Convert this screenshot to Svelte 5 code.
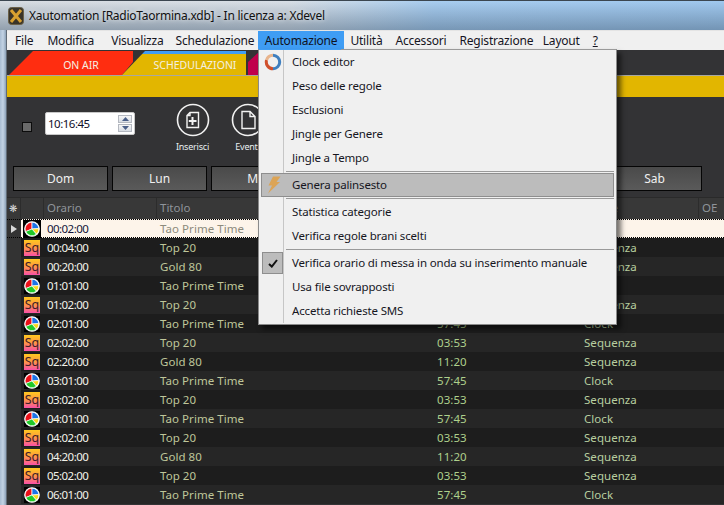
<script>
  const menus = ['File', 'Modifica', 'Visualizza', 'Schedulazione', 'Automazione', 'Utilità', 'Accessori', 'Registrazione', 'Layout'];
  const days = ['Dom', 'Lun', 'Mar', 'Mer', 'Gio', 'Ven', 'Sab'];

  const tao = { kind: 'clock', title: 'Tao Prime Time', len: '57:45', type: 'Clock' };
  const top20 = { kind: 'seq', title: 'Top 20', len: '03:53', type: 'Sequenza' };
  const gold = { kind: 'seq', title: 'Gold 80', len: '11:20', type: 'Sequenza' };

  const rows = [
    { time: '00:02:00', ...tao, selected: true },
    { time: '00:04:00', ...top20 },
    { time: '00:20:00', ...gold },
    { time: '01:01:00', ...tao },
    { time: '01:02:00', ...top20 },
    { time: '02:01:00', ...tao },
    { time: '02:02:00', ...top20 },
    { time: '02:20:00', ...gold },
    { time: '03:01:00', ...tao },
    { time: '03:02:00', ...top20 },
    { time: '04:01:00', ...tao },
    { time: '04:02:00', ...top20 },
    { time: '04:20:00', ...gold },
    { time: '05:02:00', ...top20 },
    { time: '06:01:00', ...tao }
  ];

  const groups = [
    ['Clock editor', 'Peso delle regole', 'Esclusioni', 'Jingle per Genere', 'Jingle a Tempo'],
    ['Genera palinsesto'],
    ['Statistica categorie', 'Verifica regole brani scelti'],
    ['Verifica orario di messa in onda su inserimento manuale', 'Usa file sovrapposti', 'Accetta richieste SMS']
  ];
</script>

<div class="window">
  <div class="titlebar">
    <svg class="logo" width="16" height="18" viewBox="0 0 16 18">
      <rect x="0.5" y="0.5" width="15" height="17" rx="3" fill="#3a3428" stroke="#6a6048" />
      <path d="M3 3 L13 15 M13 3 L3 15" stroke="#d8a030" stroke-width="3" fill="none" />
    </svg>
    <span class="title">Xautomation [RadioTaormina.xdb] - In licenza a: Xdevel</span>
  </div>

  <div class="client">
    <nav class="menubar">
      {#each menus as m}
        <span class="menu" class:open={m === 'Automazione'}>{m}</span>
      {/each}
      <span class="menu help">?</span>
    </nav>

    <div class="tabs">
      <div class="tab onair">ON AIR</div>
      <div class="tab sched">SCHEDULAZIONI</div>
      <div class="tab third"></div>
    </div>
    <div class="band"></div>

    <div class="toolbar">
      <span class="check"></span>
      <div class="timebox">
        <span>10:16:45</span>
        <div class="spin">
          <i><svg width="7" height="4" viewBox="0 0 7 4"><path d="M3.5 0 L7 4 H0 Z" fill="#4a5f88" /></svg></i>
          <i><svg width="7" height="4" viewBox="0 0 7 4"><path d="M0 0 H7 L3.5 4 Z" fill="#4a5f88" /></svg></i>
        </div>
      </div>
      <div class="tool first">
        <svg width="34" height="34" viewBox="0 0 34 34" fill="none" stroke="#f2f2f2">
          <circle cx="17" cy="17" r="15.5" stroke-width="1.6" />
          <path d="M14 9.5 H22.5 V24.5 H11 V12.5 Z M14 9.5 V12.5 H11" stroke-width="1.4" />
          <path d="M16.5 14 V22 M12.8 18 H20.5" stroke-width="2" />
        </svg>
        <span>Inserisci</span>
      </div>
      <div class="tool">
        <svg width="34" height="34" viewBox="0 0 34 34" fill="none" stroke="#f2f2f2">
          <circle cx="17" cy="17" r="15.5" stroke-width="1.6" />
          <path d="M11 8.5 H19 L24 13.5 V25.5 H11 Z M19 8.5 V13.5 H24" stroke-width="1.4" />
        </svg>
        <span>Eventi</span>
      </div>
    </div>

    <div class="days">
      {#each days as d}
        <div class="day">{d}</div>
      {/each}
    </div>

    <div class="grid">
      <div class="head">
        <span class="c-star">❋</span>
        <span class="c-icon"></span>
        <span class="c-time">Orario</span>
        <span class="c-title">Titolo</span>
        <span class="c-len">Durata</span>
        <span class="c-type">Classe</span>
        <span class="c-oe">OE</span>
      </div>
      {#each rows as r}
        <div class="row" class:selected={r.selected}>
          <span class="marker">
            {#if r.selected}
              <svg width="6" height="8" viewBox="0 0 6 8"><path d="M0 0 L6 4 L0 8 Z" fill="#d8d8d8" /></svg>
            {/if}
          </span>
          <span class="cell-icon">
            {#if r.kind === 'clock'}
              <svg width="16" height="16" viewBox="0 0 16 16">
                <rect width="16" height="16" fill="#000" />
                <circle cx="8" cy="8" r="7.8" fill="#fff" />
                <g stroke="#fff" stroke-width="0.7">
                  <path d="M8 8 L8 1.2 A6.8 6.8 0 0 0 1.7 10.6 Z" fill="#ec1018" />
                  <path d="M8 8 L8 1.2 A6.8 6.8 0 0 1 14.8 7.6 Z" fill="#1c74e8" />
                  <path d="M8 8 L14.8 7.6 A6.8 6.8 0 0 1 12.4 13.2 Z" fill="#f8d818" />
                  <path d="M8 8 L12.4 13.2 A6.8 6.8 0 0 1 1.7 10.6 Z" fill="#20c828" />
                </g>
              </svg>
            {:else}
              <span class="sq">Sq</span>
            {/if}
          </span>
          <span class="c-time time">{r.time}</span>
          <span class="c-title name">{r.title}</span>
          <span class="c-len len">{r.len}</span>
          <span class="c-type kind">{r.type}</span>
        </div>
      {/each}
    </div>

    <div class="dropdown">
      {#each groups as group, g}
        {#if g > 0}<div class="sep"></div>{/if}
        {#each group as item}
          <div class="item" class:hot={item === 'Genera palinsesto'}>
            <span class="gutter" class:checked={item.startsWith('Verifica orario')}>
              {#if item === 'Clock editor'}
                <svg width="18" height="18" viewBox="0 0 18 18" fill="none" stroke-width="3">
                  <path d="M9 2.2 A6.8 6.8 0 0 1 15.7 9 A6.8 6.8 0 0 1 9 15.8" stroke="#3f7fbf" />
                  <path d="M9 15.8 A6.8 6.8 0 0 1 2.6 7" stroke="#d0502c" />
                  <path d="M2.6 7 A6.8 6.8 0 0 1 9 2.2" stroke="#e8b48c" />
                </svg>
              {:else if item === 'Genera palinsesto'}
                <svg width="14" height="18" viewBox="0 0 14 18">
                  <path d="M6 0.5 H13.5 L9.5 6 H13 L1 17.5 L5 9.5 H1.5 Z" fill="#e0a24c" />
                </svg>
              {:else if item.startsWith('Verifica orario')}
                <svg width="10" height="9" viewBox="0 0 10 9" fill="none">
                  <path d="M1 5 L3.8 7.6 L9 1" stroke="#111" stroke-width="2" />
                </svg>
              {/if}
            </span>
            <span class="label">{item}</span>
          </div>
        {/each}
      {/each}
    </div>
  </div>
</div>

<style>
  :global(body) {
    margin: 0;
    overflow: hidden;
    background: #333;
  }

  .window {
    width: 724px;
    height: 505px;
    display: flex;
    flex-direction: column;
    overflow: hidden;
    font-family: "Noto Sans", sans-serif;
    font-size: 12px;
    background: linear-gradient(90deg, #a9bdd2 0, #c3d3e4 3px, #8da2b8 6px, #333 7px);
  }

  .titlebar {
    flex: 0 0 30px;
    display: flex;
    align-items: center;
    gap: 5px;
    padding-left: 8px;
    box-sizing: border-box;
    border-top: 1px solid #3b4650;
    background: linear-gradient(180deg, rgba(255, 255, 255, 0) 0, rgba(60, 85, 110, 0.45) 100%),
      linear-gradient(90deg, #d8dde2 0, #d8dfe6 40%, #a8cdf0 60%, #a0c8ee 100%);
  }

  .title {
    color: #111;
    font-size: 12px;
    letter-spacing: -0.25px;
    text-shadow: 0 0 5px rgba(255, 255, 255, 0.9);
  }

  .client {
    position: relative;
    flex: 1;
    margin-left: 7px;
    min-height: 0;
    background: #333335;
  }

  .menubar {
    height: 20px;
    display: flex;
    align-items: stretch;
    padding-left: 1.5px;
    background: #f0f0f0;
    border-top: 1px solid #e4e4e4;
    box-sizing: border-box;
    color: #15151f;
  }

  .menu {
    padding: 0 6.5px;
    line-height: 19px;
    letter-spacing: -0.2px;
  }

  .menu:nth-child(2) {
    padding-left: 7.5px;
    padding-right: 7.5px;
  }

  .menu:nth-child(3) {
    padding-left: 9.5px;
    padding-right: 5.5px;
  }

  .menu:nth-child(4) {
    padding-right: 4px;
  }

  .menu:nth-child(8) {
    padding-right: 3px;
  }

  .menu.open {
    background: #3f9df4;
    color: #10131f;
  }

  .menu.help {
    text-decoration: underline;
  }

  .tabs {
    height: 25px;
    display: flex;
    align-items: flex-end;
    padding-top: 1px;
    padding-left: 2px;
    box-sizing: border-box;
  }

  .tab {
    height: 24px;
    box-sizing: border-box;
    text-align: center;
    line-height: 28px;
    color: #f4f0e0;
    font-size: 10.5px;
  }

  .onair {
    width: 124px;
    padding-left: 20px;
    background: #ff2d10;
    clip-path: polygon(0 100%, 24px 0, 100% 0, 100% 11px, 113px 100%);
  }

  .sched {
    width: 124px;
    margin-left: -11px;
    padding-left: 22px;
    background: linear-gradient(180deg, #3f9df4 0, #3f9df4 3px, #e2b600 3px);
    clip-path: polygon(0 100%, 23px 0, 100% 0, 100% 100%);
  }

  .third {
    width: 60px;
    margin-left: 2px;
    background: #c0004c;
    clip-path: polygon(0 100%, 0 11px, 12px 0, 100% 0, 100% 100%);
  }

  .band {
    height: 22px;
    box-sizing: border-box;
    background: #e2b600;
    border-top: 1px solid #a8a8a0;
  }

  .toolbar {
    height: 69px;
    display: flex;
    color: #eee;
    box-sizing: border-box;
    padding: 6px 0 0 15px;
  }

  .check {
    width: 10px;
    height: 10px;
    margin-top: 19px;
    background: #6a6a6a;
    border: 1px solid #0c0c0c;
    box-sizing: border-box;
  }

  .timebox {
    width: 90px;
    height: 23px;
    margin: 9px 0 0 13px;
    padding: 0 2px;
    display: flex;
    align-items: center;
    justify-content: space-between;
    box-sizing: border-box;
    background: #fff;
    border: 1px solid #c8c8c8;
    border-radius: 2px;
    color: #10102a;
    font-size: 11.5px;
    letter-spacing: -0.5px;
  }

  .spin {
    display: flex;
    flex-direction: column;
    gap: 1px;
  }

  .spin i {
    width: 14px;
    height: 8px;
    display: flex;
    align-items: center;
    justify-content: center;
    background: linear-gradient(180deg, #f6f6f6, #d8dde4);
    border: 1px solid #b4b8c0;
    box-sizing: border-box;
  }

  .tool {
    width: 55px;
    display: flex;
    flex-direction: column;
    align-items: center;
    gap: 3px;
    font-size: 9px;
    letter-spacing: -0.2px;
    line-height: 13px;
    color: #e8eef0;
  }

  .tool.first {
    margin-left: 30px;
  }

  .days {
    height: 25px;
    display: flex;
    gap: 4px;
    padding-left: 6px;
  }

  .day {
    flex: 0 0 95px;
    box-sizing: border-box;
    border: 1px solid #050505;
    background: linear-gradient(180deg, #4a4a4a, #5a5a5a);
    color: #f0f0f0;
    text-align: center;
    line-height: 23px;
    font-size: 12px;
  }

  .grid {
    margin-top: 6px;
  }

  .head {
    height: 22px;
    display: flex;
    align-items: center;
    color: #8f949a;
    background: #383838;
    border-top: 1px solid #2a2a2a;
    box-sizing: border-box;
    font-size: 11.5px;
  }

  .head span {
    height: 100%;
    line-height: 20px;
    box-sizing: border-box;
    border-right: 1px solid #2c2c2c;
    padding-left: 3px;
  }

  .c-star {
    flex: 0 0 14px;
    color: #ddd;
    font-size: 10px;
    padding-left: 2px !important;
  }

  .c-icon {
    flex: 0 0 23px;
  }

  .c-time {
    flex: 0 0 113px;
  }

  .c-title {
    flex: 0 0 277px;
  }

  .c-len {
    flex: 0 0 147px;
  }

  .c-type {
    flex: 0 0 118px;
  }

  .c-oe {
    flex: 0 0 40px;
    border-right: 0 !important;
  }

  .row {
    height: 19px;
    display: flex;
    align-items: center;
    background: linear-gradient(90deg, #333 14px, #262626 14px);
    color: #f2f2ea;
    line-height: 19px;
    font-size: 11.5px;
    letter-spacing: 0.05px;
  }

  .row:nth-child(odd) {
    background: linear-gradient(90deg, #333 14px, #1d1d1d 14px);
  }

  .row > span {
    padding-left: 3px;
    box-sizing: border-box;
  }

  .row .time {
    letter-spacing: -0.55px;
  }

  .row .marker {
    flex: 0 0 14px;
    padding-left: 4px;
    display: flex;
    align-items: center;
  }

  .row .cell-icon {
    flex: 0 0 23px;
    padding-left: 3px;
    display: flex;
    align-items: center;
  }

  .sq {
    width: 16px;
    height: 16px;
    display: block;
    background: linear-gradient(180deg, #ffc820 0, #ff9a40 45%, #f850a8 100%);
    color: #40202a;
    font-size: 12.5px;
    line-height: 15px;
    text-align: center;
  }

  .name {
    color: #bfc69a;
  }

  .len {
    color: #aed08c;
  }

  .kind {
    color: #b8cfa0;
  }

  .selected {
    background: linear-gradient(90deg, #333 14px, #fdf4ea 14px) !important;
    border-top: 1px dotted #000;
    border-bottom: 1px dotted #000;
    box-sizing: border-box;
  }

  .selected .time {
    color: #14143a;
  }

  .selected .name {
    color: #8c8a7c;
  }

  .selected .cell-icon svg {
    outline: 1px solid #000;
  }

  .dropdown {
    position: absolute;
    left: 251px;
    top: 19px;
    width: 359px;
    height: 276px;
    box-sizing: border-box;
    padding: 0 2px;
    background: #f0f0f0;
    border: 1px solid #8a8a8a;
    border-top-color: #9a9a9a;
    box-shadow: 4px 4px 5px rgba(0, 0, 0, 0.55);
    color: #16161e;
  }

  .dropdown::before {
    content: "";
    position: absolute;
    left: 24px;
    top: 0;
    bottom: 1px;
    width: 1px;
    background: #c6c6c6;
  }

  .dropdown::after {
    content: "";
    position: absolute;
    left: 0;
    top: -1px;
    width: 82px;
    height: 1px;
    background: #3f9df4;
  }

  .item {
    height: 24px;
    display: flex;
    align-items: center;
    box-sizing: border-box;
    position: relative;
    z-index: 1;
  }

  .item.hot {
    background: #bcbcbc;
    border: 1px solid #8e8e8e;
  }

  .gutter {
    flex: 0 0 24px;
    height: 24px;
    display: flex;
    align-items: center;
    justify-content: center;
    box-sizing: border-box;
  }

  .hot .gutter {
    opacity: 0.9;
  }

  .gutter.checked {
    height: 22px;
    flex-basis: 21px;
    margin-left: 1px;
    margin-right: 2px;
    background: #bcbcbc;
    border: 1px solid #8e8e8e;
  }

  .label {
    padding: 0 0 2px 7px;
    font-size: 11.5px;
    letter-spacing: -0.16px;
  }

  .hot .label {
    padding-left: 6px;
  }

  .sep {
    height: 1px;
    margin: 1px 0 1px 25px;
    background: #9a9a9a;
    position: relative;
    z-index: 1;
  }
</style>
